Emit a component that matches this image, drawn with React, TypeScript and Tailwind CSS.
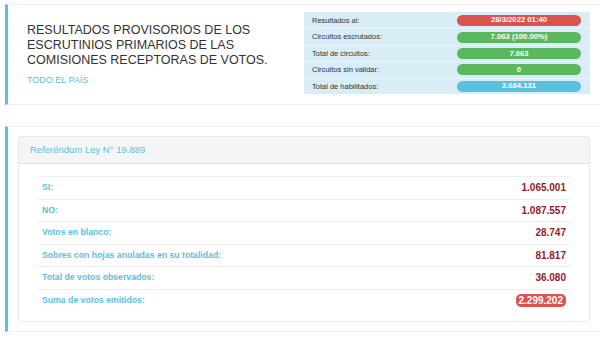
const resumen = [
  { label: "Resultados al:", value: "28/3/2022 01:40", color: "bg-[#d9534f]" },
  { label: "Circuitos escrutados:", value: "7.063 (100.00%)", color: "bg-[#5cb85c]" },
  { label: "Total de circuitos:", value: "7.063", color: "bg-[#5cb85c]" },
  { label: "Circuitos sin validar:", value: "0", color: "bg-[#5cb85c]" },
  { label: "Total de habilitados:", value: "2.684.131", color: "bg-[#5bc0de]" },
];

const votos = [
  { label: "SI:", value: "1.065.001" },
  { label: "NO:", value: "1.087.557" },
  { label: "Votos en blanco:", value: "28.747" },
  { label: "Sobres con hojas anuladas en su totalidad:", value: "81.817" },
  { label: "Total de votos observados:", value: "36.080" },
  { label: "Suma de votos emitidos:", value: "2.299.202", badge: true },
];

function App() {
  return (
    <div
      className="w-[600px] h-[343px] overflow-hidden bg-white pl-[5px] pt-[4px]"
      style={{ fontFamily: '"Liberation Sans", Arial, sans-serif' }}
    >
      {/* cabecera */}
      <div className="flex h-[101px] items-start justify-between border-y border-[#f0f0f0] border-l-[3px] border-l-[#5bc0de] bg-white pr-[10px] pt-[7px]">
        <div className="pl-[19px] pt-[11px]">
          <h1 className="text-[12.5px] leading-[15px] text-[#333] uppercase">
            RESULTADOS PROVISORIOS DE LOS
            <br />
            ESCRUTINIOS PRIMARIOS DE LAS
            <br />
            COMISIONES RECEPTORAS DE VOTOS.
          </h1>
          <div className="mt-[7px] text-[9px] leading-[11px] text-[#5bc0de]">TODO EL PAÍS</div>
        </div>
        <div className="w-[286px] bg-[#d9edf7]">
          {resumen.map((r, i) => (
            <div
              key={r.label}
              className={`flex h-[16.4px] items-center justify-between pl-[8px] pr-[9px] ${i > 0 ? "border-t border-[#e6f3fa]" : ""}`}
            >
              <span className="text-[7.5px] text-[#333]">{r.label}</span>
              <span
                className={`${r.color} flex h-[11px] w-[124px] items-center justify-center rounded-full text-[7.7px] font-bold text-white`}
              >
                {r.value}
              </span>
            </div>
          ))}
        </div>
      </div>

      {/* referendum */}
      <div className="mt-[21px] border-y border-[#f0f0f0] border-l-[3px] border-l-[#5bc0de] bg-white py-[9px] pl-[10px] pr-[10px]">
        <div className="rounded-[3px] border border-[#e8e8e8]">
          <div className="flex h-[27px] items-center border-b border-[#e3e3e3] bg-[#f5f5f5] pl-[11px] text-[9.5px] text-[#5bc0de]">
            Referéndum Ley N° 19.889
          </div>
          <div className="px-[18px] pt-[12px] pb-[10px]">
            {votos.map((v) => (
              <div
                key={v.label}
                className="flex h-[22.5px] items-center justify-between border-t border-[#eeeeee] px-[5px]"
              >
                <span className="text-[8.7px] font-bold text-[#5bc0de]">{v.label}</span>
                {v.badge ? (
                  <span className="rounded-[5px] bg-[#d9534f] px-[3px] text-[10px] leading-[13px] font-bold text-white">
                    {v.value}
                  </span>
                ) : (
                  <span className="text-[10px] font-bold text-[#951b1e]">{v.value}</span>
                )}
              </div>
            ))}
          </div>
        </div>
      </div>
    </div>
  );
}

export default App;
